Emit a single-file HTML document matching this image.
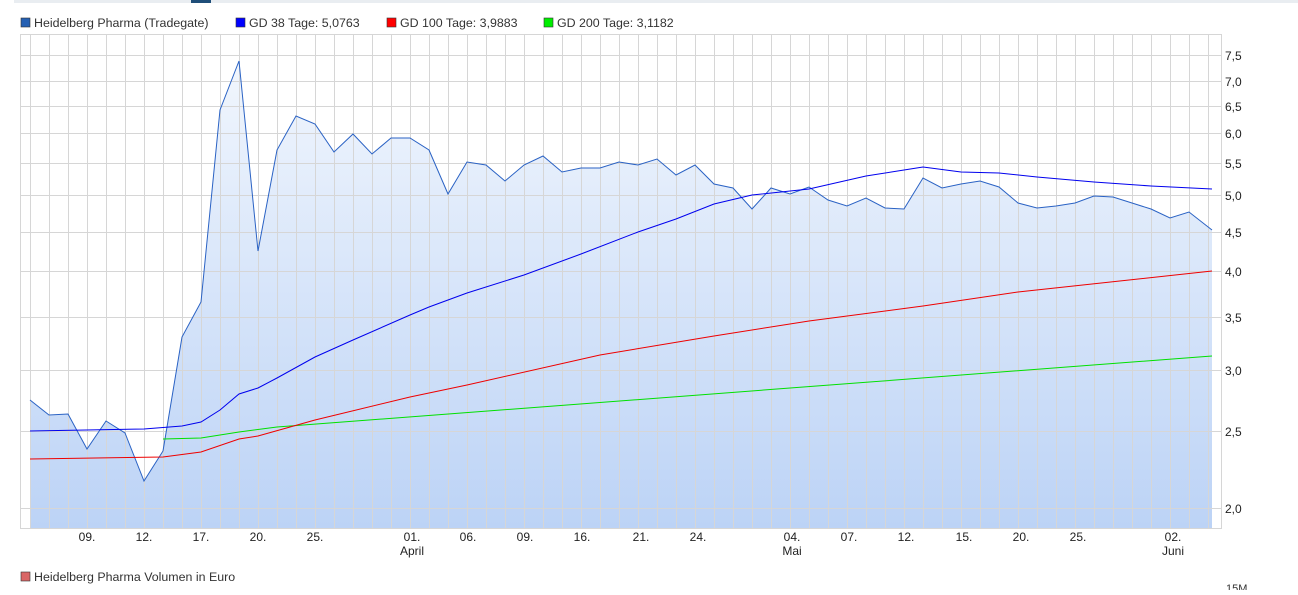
<!DOCTYPE html>
<html><head><meta charset="utf-8"><style>
body{margin:0;width:1298px;height:590px;overflow:hidden;background:#fff;font-family:"Liberation Sans",sans-serif;}
</style></head><body>
<svg width="1298" height="590" xmlns="http://www.w3.org/2000/svg" font-family="Liberation Sans, sans-serif" font-size="12">
<defs><linearGradient id="g" x1="0" y1="0" x2="0" y2="1"><stop offset="0" stop-color="#f1f6fd"/><stop offset="1" stop-color="#bcd3f6"/></linearGradient></defs>
<rect x="14" y="0" width="1284" height="3" fill="#e9edf1"/>
<rect x="191" y="0" width="20" height="3" fill="#1f4e79"/>
<g fill="#333" font-size="12.4">
<rect x="21" y="18" width="9" height="9" fill="#2560b3" stroke="#333" stroke-width="0.6"/><text x="34" y="27">Heidelberg Pharma (Tradegate)</text>
<rect x="236" y="18" width="9" height="9" fill="#0000ff" stroke="#333" stroke-width="0.6"/><text x="249" y="27">GD 38 Tage: 5,0763</text>
<rect x="387" y="18" width="9" height="9" fill="#ff0000" stroke="#333" stroke-width="0.6"/><text x="400" y="27">GD 100 Tage: 3,9883</text>
<rect x="544" y="18" width="9" height="9" fill="#00ee00" stroke="#333" stroke-width="0.6"/><text x="557" y="27">GD 200 Tage: 3,1182</text>
<rect x="21" y="572" width="9" height="9" fill="#d96666" stroke="#333" stroke-width="0.6"/><text x="34" y="581">Heidelberg Pharma Volumen in Euro</text>
<text x="1226" y="592" font-size="11">15M</text>
</g>
<path d="M30 400L49 415L68 414L87 449L106 421L125 433L144 481L163 451L182 337L201 302L220 110L239 61L258 251L277 150L296 116L315 124L334 152L353 134L372 154L391 138L410 138L429 150L448 194L467 162L486 165L505 181L524 165L543 156L562 172L581 168L600 168L619 162L638 165L657 159L676 175L695 165L714 184L733 188L752 209L771 188L790 194L809 187L828 200L847 206L866 198L885 208L904 209L923 178L942 188L961 184L980 181L999 187L1018 203L1037 208L1056 206L1075 203L1094 196L1113 197L1132 203L1151 209L1170 218L1189 212L1212 230L1212 528L30 528Z" fill="url(#g)"/>
<g stroke="#d6d6d6" stroke-width="1" fill="none">
<path d="M20.5 34.5H1221.5V528.5H20.5Z"/>
<path d="M20 55.5H1221M20 81.5H1221M20 106.5H1221M20 133.5H1221M20 163.5H1221M20 195.5H1221M20 232.5H1221M20 271.5H1221M20 317.5H1221M20 370.5H1221M20 431.5H1221M20 508.5H1221"/>
<path d="M30.5 34V528M49.5 34V528M68.5 34V528M87.5 34V528M106.5 34V528M125.5 34V528M144.5 34V528M163.5 34V528M182.5 34V528M201.5 34V528M220.5 34V528M239.5 34V528M258.5 34V528M277.5 34V528M296.5 34V528M315.5 34V528M334.5 34V528M353.5 34V528M372.5 34V528M391.5 34V528M410.5 34V528M429.5 34V528M448.5 34V528M467.5 34V528M486.5 34V528M505.5 34V528M524.5 34V528M543.5 34V528M562.5 34V528M581.5 34V528M600.5 34V528M619.5 34V528M638.5 34V528M657.5 34V528M676.5 34V528M695.5 34V528M714.5 34V528M733.5 34V528M752.5 34V528M771.5 34V528M790.5 34V528M809.5 34V528M828.5 34V528M847.5 34V528M866.5 34V528M885.5 34V528M904.5 34V528M923.5 34V528M942.5 34V528M961.5 34V528M980.5 34V528M999.5 34V528M1018.5 34V528M1037.5 34V528M1056.5 34V528M1075.5 34V528M1094.5 34V528M1113.5 34V528M1132.5 34V528M1151.5 34V528M1170.5 34V528M1189.5 34V528M1208.5 34V528"/>
</g>
<path d="M30 400L49 415L68 414L87 449L106 421L125 433L144 481L163 451L182 337L201 302L220 110L239 61L258 251L277 150L296 116L315 124L334 152L353 134L372 154L391 138L410 138L429 150L448 194L467 162L486 165L505 181L524 165L543 156L562 172L581 168L600 168L619 162L638 165L657 159L676 175L695 165L714 184L733 188L752 209L771 188L790 194L809 187L828 200L847 206L866 198L885 208L904 209L923 178L942 188L961 184L980 181L999 187L1018 203L1037 208L1056 206L1075 203L1094 196L1113 197L1132 203L1151 209L1170 218L1189 212L1212 230" fill="none" stroke="#2a62c4" stroke-width="1"/>
<path d="M163 439L201 438L239 432L277 427L1212 356" fill="none" stroke="#00e000" stroke-width="1"/>
<path d="M30 459L163 457L201 452L239 439L258 436L315 420L410 397L467 385L600 355L714 336L809 321L923 306L1018 292L1212 271" fill="none" stroke="#ee0000" stroke-width="1"/>
<path d="M30 431L144 429L182 426L201 422L220 410L239 394L258 388L277 378L315 357L353 340L410 315L429 307L467 293L524 275L581 254L638 232L676 219L714 204L752 195L809 189L866 176L904 170L923 167L961 172L999 173L1037 177L1094 182L1151 186L1212 189" fill="none" stroke="#0000ee" stroke-width="1"/>
<g fill="#222" font-size="12">
<text x="1225" y="60">7,5</text><text x="1225" y="86">7,0</text><text x="1225" y="111">6,5</text><text x="1225" y="138">6,0</text><text x="1225" y="168">5,5</text><text x="1225" y="200">5,0</text><text x="1225" y="237">4,5</text><text x="1225" y="276">4,0</text><text x="1225" y="322">3,5</text><text x="1225" y="375">3,0</text><text x="1225" y="436">2,5</text><text x="1225" y="513">2,0</text>
</g>
<g fill="#222" font-size="12" text-anchor="middle">
<text x="87" y="541">09.</text><text x="144" y="541">12.</text><text x="201" y="541">17.</text><text x="258" y="541">20.</text><text x="315" y="541">25.</text><text x="412" y="541">01.</text><text x="412" y="555">April</text><text x="468" y="541">06.</text><text x="525" y="541">09.</text><text x="582" y="541">16.</text><text x="641" y="541">21.</text><text x="698" y="541">24.</text><text x="792" y="541">04.</text><text x="792" y="555">Mai</text><text x="849" y="541">07.</text><text x="906" y="541">12.</text><text x="964" y="541">15.</text><text x="1021" y="541">20.</text><text x="1078" y="541">25.</text><text x="1173" y="541">02.</text><text x="1173" y="555">Juni</text>
</g>
</svg>
</body></html>
